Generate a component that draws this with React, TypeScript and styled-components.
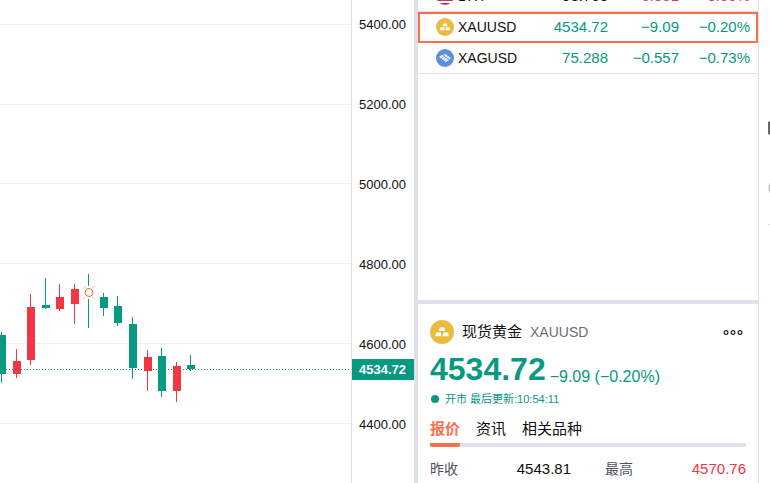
import React from "react";
import styled, { createGlobalStyle, css } from "styled-components";

const GREEN = "#089981";
const RED = "#f23645";
const ORANGE = "#f7724a";
const LINE = "#e0e0e8";
const DIVIDER = "#e0e0ec";

const GlobalStyle = createGlobalStyle`
  * { box-sizing: border-box; }
  body {
    margin: 0;
    background: #fff;
    color: #0f0f0f;
    font-family: "Liberation Sans", "Noto Sans CJK SC", sans-serif;
    font-size: 14px;
  }
  button { font: inherit; color: inherit; background: none; border: 0; padding: 0; cursor: pointer; }
`;

const Page = styled.main`
  display: flex;
  height: 100vh;
  overflow: hidden;
`;

const ChartPane = styled.section`
  flex: 1;
  min-width: 0;
  overflow: hidden;
`;

const ChartSvg = styled.svg`
  display: block;
  width: 100%;
  height: 100%;
`;

const PriceAxis = styled.aside`
  position: relative;
  flex: none;
  width: 63px;
  border-left: 1px solid ${LINE};
  padding: 17px 8px 0 0;
  display: flex;
  flex-direction: column;
  gap: 64px;
  font-size: 13px;
  line-height: 16px;
  text-align: right;
`;

const LastPrice = styled.strong`
  position: absolute;
  top: 359px;
  left: 0;
  right: 0;
  padding-right: 8px;
  background: ${GREEN};
  color: #fff;
  font-weight: 700;
  line-height: 21px;
`;

const SidePanel = styled.section`
  flex: none;
  width: 344px;
  border-left: 4px solid ${DIVIDER};
  display: flex;
  flex-direction: column;
`;

const Watchlist = styled.div`
  height: 300px;
  flex: none;
  overflow: hidden;
`;

const Quotes = styled.table`
  width: 100%;
  margin-top: -19px;
  border-collapse: separate;
  border-spacing: 0;
  table-layout: fixed;
`;

const QuoteRow = styled.tr<{ $selected?: boolean }>`
  height: 31px;
  ${(p) => p.$selected && css`
    outline: 2px solid ${ORANGE};
    outline-offset: -2px;
  `}
`;

const Cell = styled.td<{ $tone?: string; $line?: boolean }>`
  padding: 0;
  font-size: 15px;
  line-height: 20px;
  text-align: right;
  color: ${(p) => p.$tone ?? "inherit"};
  border-bottom: 1px solid ${(p) => (p.$line ? LINE : "transparent")};
`;

const SymbolCell = styled(Cell)`
  width: 118px;
  padding-left: 18px;
  font-size: 14px;
`;

const ChangeCell = styled(Cell)`
  width: 71px;
`;

const PercentCell = styled(Cell)`
  width: 79px;
  padding-right: 8px;
`;

const SymbolName = styled.span`
  display: flex;
  align-items: center;
  gap: 4px;
`;

const Details = styled.div`
  flex: 1;
  border-top: 4px solid ${DIVIDER};
  padding: 16px 12px 0;
`;

const Heading = styled.header`
  display: flex;
  align-items: center;
  gap: 8px;
  height: 24px;
`;

const Title = styled.h1`
  margin: 0;
  font-size: 15px;
  line-height: 24px;
  font-weight: 400;
`;

const Ticker = styled.span`
  color: #6a6d78;
`;

const MoreButton = styled.button`
  margin-left: auto;
  margin-right: 3px;
  display: flex;
`;

const PriceLine = styled.div`
  display: flex;
  align-items: flex-end;
  gap: 4px;
  height: 44px;
  padding-bottom: 1px;
  color: ${GREEN};
  font-size: 16px;
  line-height: 20px;
`;

const Price = styled.strong`
  font-size: 32px;
  line-height: 36px;
  font-weight: 700;
`;

const Status = styled.p`
  display: flex;
  align-items: center;
  gap: 6px;
  margin: 0;
  padding-left: 1px;
  color: ${GREEN};
  font-size: 11px;
  line-height: 22px;
`;

const Dot = styled.i`
  width: 8px;
  height: 8px;
  border-radius: 50%;
  background: currentColor;
`;

const Tabs = styled.nav`
  display: flex;
  gap: 16px;
  margin-top: 8px;
  border-bottom: 4px solid ${DIVIDER};
  border-radius: 2px;
`;

const Tab = styled.button<{ $active?: boolean }>`
  height: 29px;
  margin-bottom: -4px;
  font-size: 15px;
  line-height: 20px;
  padding-bottom: 4px;
  border-bottom: 4px solid transparent;
  ${(p) => p.$active && css`
    color: ${ORANGE};
    font-weight: 700;
    border-color: ${ORANGE};
    border-radius: 2px;
  `}
`;

const Stats = styled.dl`
  display: grid;
  grid-template-columns: 1fr 1fr;
  column-gap: 34px;
  margin: 10px 0 0;
  line-height: 24px;
`;

const Stat = styled.div`
  display: flex;
  justify-content: space-between;
`;

const StatName = styled.dt`
  color: #50535e;
`;

const StatValue = styled.dd<{ $tone?: string }>`
  margin: 0;
  font-size: 15px;
  color: ${(p) => p.$tone ?? "inherit"};
`;

const Rail = styled.aside`
  flex: none;
  width: 12px;
  border-left: 1px solid ${LINE};
  padding: 120px 0 0 9px;
  overflow: hidden;
`;

const RailButton = styled.button`
  display: block;
  width: 24px;
  height: 60px;
`;

const RailRule = styled.hr`
  width: 24px;
  margin: -16px 0 0 0;
  border: 0;
  border-top: 1px solid ${LINE};
`;

const GoldIcon = ({ size }: { size: number }) => (
  <svg width={size} height={size} viewBox="0 0 24 24" aria-hidden="true">
    <circle cx="12" cy="12" r="12" fill="#ebbb40" />
    <path fill="#fff" d="M9.800 7.200h4.400l1 3.800H8.800zM6 12.400h4.600l1 3.800H5zM13.400 12.400H18l1 3.800h-6.600z" />
  </svg>
);

const SilverIcon = () => (
  <svg width="18" height="18" viewBox="0 0 18 18" aria-hidden="true">
    <circle cx="9" cy="9" r="9" fill="#5f8ee0" />
    <path fill="#fff" d="M3 8l3-2 7 5-3 2zM7 6l2-1 6 4-1.500 1.500z" />
    <path stroke="#5f8ee0" strokeWidth=".7" d="M5 10l4-4M7 11.500l5-5M9 12.500l4-4" />
  </svg>
);

const FlagIcon = () => (
  <svg width="18" height="18" viewBox="0 0 18 18" aria-hidden="true">
    <defs><clipPath id="flag"><circle cx="9" cy="9" r="9" /></clipPath></defs>
    <g clipPath="url(#flag)">
      <path fill="#fff" d="M0 0h18v18H0z" />
      <path stroke="#c9344f" strokeWidth="2" d="M0 1h18M0 5h18M0 9h18M0 13h18M0 17h18" />
      <path fill="#3c5a9a" d="M0 0h9v9H0z" />
    </g>
  </svg>
);

const quotes = [
  { symbol: "DXY", icon: <FlagIcon />, last: "98.768", change: "+0.051", percent: "+0.05%", tone: "#dd3b62", lastTone: "#0f0f0f" },
  { symbol: "XAUUSD", icon: <GoldIcon size={18} />, last: "4534.72", change: "−9.09", percent: "−0.20%", tone: GREEN, selected: true },
  { symbol: "XAGUSD", icon: <SilverIcon />, last: "75.288", change: "−0.557", percent: "−0.73%", tone: GREEN },
];

const ticks = ["5400.00", "5200.00", "5000.00", "4800.00", "4600.00", "4400.00"];

type Candle = { x: number; high: number; top: number; bottom: number; low: number; up?: boolean };

const candles: Candle[] = [
  { x: 1, high: 332, top: 335, bottom: 374, low: 383, up: true },
  { x: 16, high: 349, top: 361, bottom: 374, low: 378 },
  { x: 30, high: 294, top: 307, bottom: 360, low: 365 },
  { x: 45, high: 278, top: 305, bottom: 308, low: 309, up: true },
  { x: 59, high: 284, top: 297, bottom: 309, low: 311 },
  { x: 74, high: 284, top: 289, bottom: 304, low: 324 },
  { x: 103, high: 293, top: 297, bottom: 308, low: 316, up: true },
  { x: 117, high: 296, top: 306, bottom: 323, low: 326, up: true },
  { x: 132, high: 317, top: 324, bottom: 368, low: 379, up: true },
  { x: 147, high: 350, top: 357, bottom: 371, low: 391 },
  { x: 161, high: 348, top: 356, bottom: 391, low: 397, up: true },
  { x: 176, high: 362, top: 366, bottom: 391, low: 402 },
  { x: 190, high: 355, top: 365, bottom: 369, low: 371, up: true },
];

const Chart = () => (
  <ChartSvg viewBox="0 0 351 483" preserveAspectRatio="xMinYMin slice" role="img" aria-label="XAUUSD">
    {[24, 104, 183, 263, 343, 423].map((y) => (
      <rect key={y} x="0" y={y} width="351" height="1" fill="#f1f1f3" />
    ))}
    <path d="M0 369.500H351" stroke={GREEN} strokeDasharray="1 2" />
    {candles.map((c) => (
      <g key={c.x} fill={c.up ? GREEN : RED}>
        <rect x={c.x} y={c.high} width="1" height={c.low - c.high} />
        <rect x={c.x - 3} y={c.top} width="8" height={c.bottom - c.top} />
      </g>
    ))}
    <path d="M88.500 274v12M88.500 299v29" stroke={GREEN} />
    <g fill="none" stroke="#ef6a55">
      <circle cx="89" cy="292.500" r="4" fill="#fff8ec" />
      <path d="M85 287.500l-1-1M93 287.500l1-1M85 297.500l-1 1M93 297.500l1 1" />
    </g>
  </ChartSvg>
);

export default function App() {
  return (
    <>
      <GlobalStyle />
      <Page>
        <ChartPane><Chart /></ChartPane>
        <PriceAxis>
          {ticks.map((t) => <span key={t}>{t}</span>)}
          <LastPrice>4534.72</LastPrice>
        </PriceAxis>
        <SidePanel>
          <Watchlist>
            <Quotes>
              <tbody>
                {quotes.map((q) => (
                  <QuoteRow key={q.symbol} $selected={q.selected}>
                    <SymbolCell $line={!q.selected}><SymbolName>{q.icon}{q.symbol}</SymbolName></SymbolCell>
                    <Cell $tone={q.lastTone ?? q.tone} $line={!q.selected}>{q.last}</Cell>
                    <ChangeCell $tone={q.tone} $line={!q.selected}>{q.change}</ChangeCell>
                    <PercentCell $tone={q.tone} $line={!q.selected}>{q.percent}</PercentCell>
                  </QuoteRow>
                ))}
              </tbody>
            </Quotes>
          </Watchlist>
          <Details>
            <Heading>
              <GoldIcon size={24} />
              <Title>现货黄金</Title>
              <Ticker>XAUUSD</Ticker>
              <MoreButton aria-label="更多">
                <svg width="20" height="6" viewBox="0 0 20 6" fill="none" stroke="#222" strokeWidth="1.200">
                  <circle cx="3" cy="3.500" r="1.900" /><circle cx="10" cy="3.500" r="1.900" /><circle cx="17" cy="3.500" r="1.900" />
                </svg>
              </MoreButton>
            </Heading>
            <PriceLine><Price>4534.72</Price><span>−9.09 (−0.20%)</span></PriceLine>
            <Status><Dot />开市 最后更新:10:54:11</Status>
            <Tabs>
              <Tab $active>报价</Tab>
              <Tab>资讯</Tab>
              <Tab>相关品种</Tab>
            </Tabs>
            <Stats>
              <Stat><StatName>昨收</StatName><StatValue>4543.81</StatValue></Stat>
              <Stat><StatName>最高</StatName><StatValue $tone={RED}>4570.76</StatValue></Stat>
            </Stats>
          </Details>
        </SidePanel>
        <Rail>
          <RailButton aria-label="列表">
            <svg width="24" height="60" viewBox="0 0 24 60" fill="none" stroke="#333" strokeWidth="1.500">
              <rect x="1" y="2" width="20" height="12" rx="1" />
            </svg>
          </RailButton>
          <RailButton aria-label="提醒">
            <svg width="24" height="60" viewBox="0 0 24 60" fill="none" stroke="#aaa">
              <circle cx="10" cy="8" r="9" />
            </svg>
          </RailButton>
          <RailRule />
        </Rail>
      </Page>
    </>
  );
}
